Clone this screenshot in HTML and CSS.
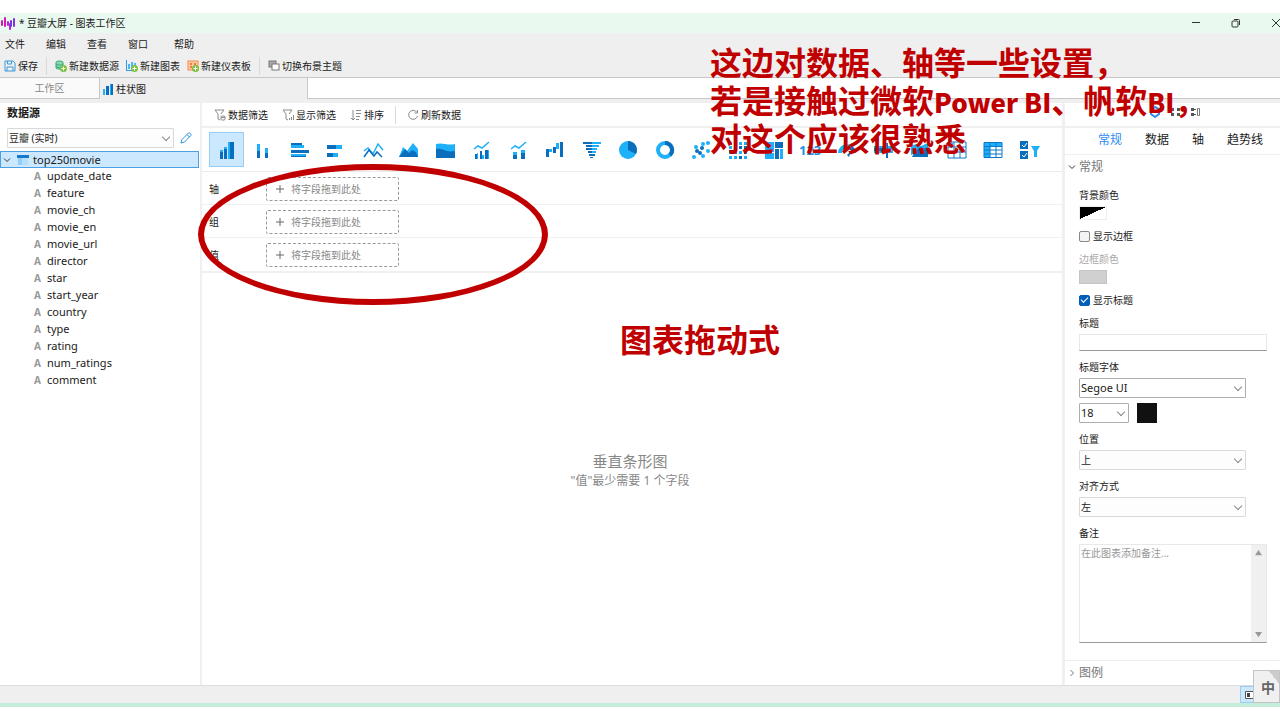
FILE: index.html
```html
<!DOCTYPE html>
<html lang="zh-CN">
<head>
    <meta charset="utf-8">
    <title>豆瓣大屏 - 图表工作区</title>
    <link rel="stylesheet" href="styles.css">
</head>
<body>

    <div id="window">
        <header id="titlebar">
            <svg class="logo" viewBox="0 0 14 14"><path d="M1 5v4M4 2v8" stroke="#d619b5"/><path d="M7 6v3M9 8v5" stroke="#b026d9"/><path d="M10 5v5M13 3v7" stroke="#7d35e0"/></svg>
            <span class="name">* 豆瓣大屏 - 图表工作区</span>
            <div class="winbtns">
                <button aria-label="最小化"><svg viewBox="0 0 10 10"><path d="M1 4.500h8"/></svg></button>
                <button aria-label="还原"><svg viewBox="0 0 10 10"><rect x="1" y="3" width="6" height="6" rx="1"/><path d="M3 1.500h4.500a1 1 0 0 1 1 1V7"/></svg></button>
                <button aria-label="关闭"><svg viewBox="0 0 10 10"><path d="M1 1l8 8M9 1l-8 8"/></svg></button>
            </div>
        </header>

        <nav id="menu">
            <a href="#">文件</a>
            <a href="#">编辑</a>
            <a href="#">查看</a>
            <a href="#">窗口</a>
            <a href="#">帮助</a>
        </nav>

        <div id="toolbar">
            <button><svg viewBox="0 0 12 12" fill="none" stroke="#3a9ad9"><path d="M1 1h8l2 2v8H1zM3.500 1v3h4V1M3 11V7h6v4"/></svg>保存</button>
            <i class="sep"></i>
            <button><svg viewBox="0 0 12 12"><path d="M1 2.500C1 .5 8 .5 8 2.500V8c0 1.500-6 1.500-7 0z" fill="#8fd6b4" stroke="#2aa876"/><path d="M1 4c1 1.500 6 1.500 7 0M1 6.500c1 1.500 6 1.500 7 0" fill="none" stroke="#2aa876"/><circle cx="8.500" cy="8.500" r="3.500" fill="#7cc142"/><path d="M8.500 6.500v4M6.500 8.500h4" stroke="#fff"/></svg>新建数据源</button>
            <button><svg viewBox="0 0 12 12"><path d="M0 0h1v10h6v1H0z" fill="#2b9de8"/><path d="M2 4h2v5H2zM5 2h2v7H5zM8 3h2v3H8z" fill="#4db4f5"/><circle cx="8.500" cy="8.500" r="3.500" fill="#7cc142"/><path d="M8.500 6.500v4M6.500 8.500h4" stroke="#fff"/></svg>新建图表</button>
            <button><svg viewBox="0 0 12 12"><rect x="1" y="1" width="10" height="9" fill="#ffc9a3" stroke="#f58b4c"/><path d="M3 3h2v2H3zM7 3h2v2H7zM3 6h2v2H3z" fill="#f47a3c"/><circle cx="8.500" cy="8.500" r="3.500" fill="#7cc142"/><path d="M8.500 6.500v4M6.500 8.500h4" stroke="#fff"/></svg>新建仪表板</button>
            <i class="sep"></i>
            <button><svg viewBox="0 0 12 12" stroke="#777"><rect x="1" y="1" width="7" height="6" fill="#aaa"/><rect x="4" y="4" width="7" height="6" fill="#fff"/></svg>切换布景主题</button>
        </div>

        <div id="tabs">
            <a class="tab" href="#">工作区</a>
            <a class="tab active" href="#"><svg viewBox="0 0 12 12"><path d="M1 6h2v6H1z" fill="#1fb0fa"/><path d="M4 3h3v9H4zM9 1h2v11H9z" fill="#0a6ebd"/><path d="M8 1h1v11H8z" fill="#1fb0fa"/></svg>柱状图</a>
            <div class="rest"></div>
        </div>

        <div id="content">
            <aside id="left">
                <h2>数据源</h2>
                <div class="source">
                    <div class="select"><select aria-label="数据源"><option>豆瓣 (实时)</option></select></div>
                    <button class="edit" aria-label="编辑"><svg viewBox="0 0 12 12" fill="none" stroke="#2f96e0"><path d="M1 11l1-3.500L8.500 1c.8-.8 3.200 1.300 2.500 2.300L4.500 10zM7 2.500L9.500 5"/></svg></button>
                </div>
                <div class="root">
                    <svg class="chev" viewBox="0 0 8 8"><path d="M1 2.500l3 3 3-3"/></svg>
                    <svg class="table" viewBox="0 0 12 12"><path d="M1 4h10v7H1z" fill="#b5defb"/><path d="M1 4h4v7H1z" fill="#8fd0fa"/><path d="M0 1h12v3H0z" fill="#1478cc"/></svg>
                    top250movie
                </div>
                <ul class="fields">
                    <li>update_date</li>
                    <li>feature</li>
                    <li>movie_ch</li>
                    <li>movie_en</li>
                    <li>movie_url</li>
                    <li>director</li>
                    <li>star</li>
                    <li>start_year</li>
                    <li>country</li>
                    <li>type</li>
                    <li>rating</li>
                    <li>num_ratings</li>
                    <li>comment</li>
                </ul>
            </aside>

            <main id="main">
                <div class="tools">
                    <button><svg viewBox="0 0 12 12"><path d="M1 1h9L7 5M1 1l3 4v5l2 1"/><rect x="7" y="7" width="4" height="4" rx="1"/><path d="M7 8.500h4"/></svg>数据筛选</button>
                    <button><svg viewBox="0 0 12 12"><path d="M1 1h9L7 5M1 1l3 4v5l2 1M7.500 9v2M9.500 8v3M11.500 6v5"/></svg>显示筛选</button>
                    <button><svg viewBox="0 0 12 12"><path d="M3 1v10M1 9l2 2 2-2M6 1.500h5M6 4.500h5M6 7.500h4M6 10.500h3"/></svg>排序</button>
                    <i class="sep"></i>
                    <button><svg viewBox="0 0 12 12"><path d="M10 3.500A4.500 4.500 0 1 0 10.500 7M10.500 1v3h-3"/></svg>刷新数据</button>
                </div>

                <div class="types">
                    <button class="on" aria-label="垂直条形图"><svg viewBox="0 0 20 20"><path class="l" d="M3 10h3v3H3zM7 7h3v3H7zM11 2h3v17h-3z"/><path class="d" d="M3 12h3v7H3zM7 9h3v10H7zM13 2h4v17h-4z"/></svg></button>
                    <button aria-label="堆积条形图"><svg viewBox="0 0 20 20"><path class="l" d="M4 4h3v7H4zM12 8h3v5h-3z"/><path class="d" d="M4 11h3v7H4zM12 13h3v5h-3z"/></svg></button>
                    <button aria-label="水平条形图"><svg viewBox="0 0 20 20"><path class="l" d="M1 5h13v3H1zM1 14h15v2H1z"/><path class="d" d="M1 3h11v2H1zM1 10h18v3H1zM1 16h15v1H1z"/></svg></button>
                    <button aria-label="堆积水平条形图"><svg viewBox="0 0 20 20"><path class="d" d="M1 5h9v4H1zM1 13h6v4H1z"/><path class="l" d="M10 5h6v4h-6zM7 13h5v4H7z"/></svg></button>
                    <button aria-label="折线图"><svg viewBox="0 0 20 20"><path class="sl" d="M1 11l4-3 5 6 5-10 5 6"/><path class="sd" d="M1 17l5-7 5 6 3-4 5 5"/></svg></button>
                    <button aria-label="面积图"><svg viewBox="0 0 20 20"><path class="l" d="M0 17L4 7l4 4 6-8 5 6v8z"/><path class="d" d="M0 17l6-8 4 4 3-3 4 2 2 5z"/></svg></button>
                    <button aria-label="堆积面积图"><svg viewBox="0 0 20 20"><path class="l" d="M0 4c7-2 11 2 19 0v9H0z"/><path class="d" d="M0 9c8-1 9 4 19 2v7H0z"/></svg></button>
                    <button aria-label="组合图"><svg viewBox="0 0 20 20"><path class="sl" d="M2 9l4-3 4 2 7-6"/><path class="d" d="M3 14h2v5H3zM8 11h2v8H8zM13 10h3v9h-3z"/><path class="l" d="M5 13h1v6H5zM10 15h2v4h-2zM16 10h1v9h-1z"/></svg></button>
                    <button aria-label="堆积组合图"><svg viewBox="0 0 20 20"><path class="sl" d="M2 9l4-3 4 2 7-6"/><path class="l" d="M4 12h4v3H4zM12 10h4v3h-4z"/><path class="d" d="M4 15h4v4H4zM12 13h4v6h-4z"/></svg></button>
                    <button aria-label="瀑布图"><svg viewBox="0 0 20 20"><path class="d" d="M1 9h3v8H1zM8 7h3v6H8zM15 2h3v15h-3z"/><path class="l" d="M4 9h3v3H4zM11 3h3v6h-3z"/></svg></button>
                    <button aria-label="漏斗图"><svg viewBox="0 0 20 20"><path class="d" d="M1 2h9v2H1zM4 5h6v2H4zM4 8h6v2H4zM6 11h4v2H6zM7 14h6v2H7zM8 17h3v1H8z"/><path class="l" d="M10 2h9v2h-9zM10 5h7v2h-7zM10 8h5v2h-5zM10 11h4v2h-4z"/></svg></button>
                    <button aria-label="饼图"><svg viewBox="0 0 20 20"><circle class="l" cx="10" cy="10" r="9"/><path class="d" d="M10 10V1a9 9 0 0 1 8 13z"/></svg></button>
                    <button aria-label="环形图"><svg viewBox="0 0 20 20"><circle cx="10" cy="10" r="7" fill="none" stroke="#1fb0fa" stroke-width="4"/><path d="M10 3a7 7 0 0 1 5 12" fill="none" stroke="#0a6ebd" stroke-width="4"/></svg></button>
                    <button aria-label="散点图"><svg viewBox="0 0 20 20"><g class="l"><circle cx="5" cy="7" r="2"/><circle cx="12" cy="4" r="2"/><circle cx="17" cy="3" r="2"/><circle cx="3" cy="17" r="2"/><circle cx="17" cy="11" r="2"/><circle cx="12" cy="16" r="2"/></g><g class="d"><circle cx="11" cy="8" r="2"/><circle cx="6" cy="11" r="2"/><circle cx="9" cy="13" r="2"/></g></svg></button>
                    <button aria-label="热力图"><svg viewBox="0 0 20 20"><path class="d" d="M1 2h3v3H1zM6 2h3v3H6zM11 6h3v3h-3zM16 6h3v3h-3zM6 11h3v3H6zM11 16h3v3h-3zM16 11h3v3h-3z"/><path class="l" d="M11 2h3v3h-3zM16 2h3v3h-3zM1 6h3v3H1zM6 6h3v3H6zM1 11h3v3H1zM11 11h3v3h-3zM1 16h3v3H1zM6 16h3v3H6zM16 16h3v3h-3z"/></svg></button>
                    <button aria-label="树图"><svg viewBox="0 0 20 20"><path class="l" d="M1 2h9v10H1zM1 13h9v6H1zM16 9h3v10h-3z"/><path class="d" d="M11 2h8v6h-8zM11 9h4v10h-4z"/></svg></button>
                    <button aria-label="数值"><svg viewBox="0 0 20 20"><text x="-2" y="15">123</text></svg></button>
                    <button aria-label="仪表"><svg viewBox="0 0 20 20"><path class="l" d="M1 13a9 9 0 0 1 18 0h-4a5 5 0 0 0-10 0z"/><path class="d" d="M13 6a9 9 0 0 1 6 7h-4a5 5 0 0 0-3-4zM10 15l4-4-2 6z"/></svg></button>
                    <button aria-label="子弹图"><svg viewBox="0 0 20 20"><path class="l" d="M0 6h19v7H0z"/><path class="d" d="M12 3h2v15h-2zM0 8h12v3H0z"/></svg></button>
                    <button aria-label="地图"><svg viewBox="0 0 20 20"><path class="l" d="M1 6l5-2 5 2 7-3v9l-7 2-5-1-5 2z"/><path class="d" d="M6 10l5-3 7 3v7H2z"/></svg></button>
                    <button aria-label="透视表"><svg viewBox="0 0 20 20"><path d="M1 2h18v16H1zM1 7h18M1 12h18M7 2v16M13 2v16" fill="#fff" stroke="#0a78cc"/><path class="l" d="M2 3h4v3H2z"/></svg></button>
                    <button aria-label="表格"><svg viewBox="0 0 20 20"><rect x="1" y="2" width="18" height="16" fill="#fff"/><path class="l" d="M1 2h18v4H1zM1 2h6v16H1z"/><path d="M1 2.500h18v15H1zM1 6.500h18M1 10h18M1 14h18M7 2v16M13 2v16" fill="none" stroke="#0a78cc"/></svg></button>
                    <button aria-label="筛选器"><svg viewBox="0 0 20 20"><path class="d" d="M0 1h8v8H0zM0 11h8v8H0z"/><path d="M2 5l2 2 3-4M2 15l2 2 3-4" fill="none" stroke="#fff"/><path class="l" d="M11 6h9l-3 5v6h-3v-6z"/></svg></button>
                </div>

                <div class="shelf">
                    <span>轴</span>
                    <button class="drop"><svg viewBox="0 0 10 10"><path d="M5 1v8M1 5h8"/></svg>将字段拖到此处</button>
                </div>
                <div class="shelf">
                    <span>组</span>
                    <button class="drop"><svg viewBox="0 0 10 10"><path d="M5 1v8M1 5h8"/></svg>将字段拖到此处</button>
                </div>
                <div class="shelf last">
                    <span>值</span>
                    <button class="drop"><svg viewBox="0 0 10 10"><path d="M5 1v8M1 5h8"/></svg>将字段拖到此处</button>
                </div>

                <div class="canvas">
                    <h1>垂直条形图</h1>
                    <p>"值"最少需要 1 个字段</p>
                </div>
            </main>

            <aside id="right">
                <div class="head">
                    <svg viewBox="0 0 12 12" fill="none" stroke="#2e8cf0" stroke-width="2"><path d="M6 1l4 2v5l-4 3-4-3V3z"/></svg>
                    <svg viewBox="0 0 12 12" fill="#555"><path d="M2 2h3v3H2zM8 2h3v3H8zM2 7h3v3H2zM8 7h3v3H8z"/></svg>
                    <svg viewBox="0 0 12 12" fill="#555"><path d="M2 2h3v3H2zM2 7h3v3H2zM5 3h2v1H5zM5 8h2v1H5z"/><path d="M8.500 2.500h2v7h-2z" fill="none" stroke="#777"/></svg>
                </div>
                <nav class="proptabs">
                    <a class="on" href="#">常规</a>
                    <a href="#">数据</a>
                    <a href="#">轴</a>
                    <a href="#">趋势线</a>
                </nav>
                <button class="section"><svg class="chev" viewBox="0 0 8 8"><path d="M1 2.500l3 3 3-3"/></svg>常规</button>
                <form class="props">
                    <div class="field">
                        <label for="bg">背景颜色</label>
                        <button type="button" id="bg" class="swatch none"></button>
                    </div>
                    <div class="check"><input type="checkbox" id="showborder"><label for="showborder">显示边框</label></div>
                    <div class="field off">
                        <label for="bordercolor">边框颜色</label>
                        <button type="button" id="bordercolor" class="swatch" disabled></button>
                    </div>
                    <div class="check"><input type="checkbox" id="showtitle" checked><label for="showtitle">显示标题</label></div>
                    <div class="field">
                        <label for="title">标题</label>
                        <input type="text" id="title">
                    </div>
                    <div class="field">
                        <label for="font">标题字体</label>
                        <div class="select strong"><select id="font"><option>Segoe UI</option></select></div>
                        <div class="fontrow">
                            <div class="select strong small"><select aria-label="字号"><option>18</option></select></div>
                            <button type="button" class="black" aria-label="字体颜色"></button>
                        </div>
                    </div>
                    <div class="field">
                        <label for="pos">位置</label>
                        <div class="select"><select id="pos"><option>上</option></select></div>
                    </div>
                    <div class="field">
                        <label for="align">对齐方式</label>
                        <div class="select"><select id="align"><option>左</option></select></div>
                    </div>
                    <div class="field">
                        <label for="note">备注</label>
                        <div class="note">
                            <textarea id="note" placeholder="在此图表添加备注..."></textarea>
                            <div class="bar">
                                <svg viewBox="0 0 8 8"><path d="M4 1l4 6H0z"/></svg>
                                <svg viewBox="0 0 8 8"><path d="M4 7l4-6H0z"/></svg>
                            </div>
                        </div>
                    </div>
                </form>
                <button class="section legend"><svg class="chev" viewBox="0 0 8 8"><path d="M2.500 1l3 3-3 3"/></svg>图例</button>
            </aside>
        </div>

        <footer id="status">
            <button aria-label="面板"><svg viewBox="0 0 12 12"><path d="M1.500 2.500h9v7h-9z" fill="#fff" stroke="#555"/><path d="M3 4h3v4H3z" fill="#444"/></svg></button>
            <div id="ime">中</div>
        </footer>

        <div id="ring"></div>
        <p class="mark" id="mark1">这边对数据、轴等一些设置，<br>若是接触过微软<b>Power BI</b>、帆软<b>BI</b>，<br>对这个应该很熟悉</p>
        <p class="mark" id="mark2">图表拖动式</p>
    </div>

</body>
</html>
```

FILE: styles.css
```css
* {
    box-sizing: border-box;
}

body,
h1,
h2,
p,
ul {
    margin: 0;
    padding: 0;
}

body {
    background: #fff;
    color: #1a1a1a;
    font: 10px/14px "Noto Sans", "Noto Sans CJK SC", sans-serif;
}

a {
    color: inherit;
    text-decoration: none;
}

button,
input,
select,
textarea {
    font: inherit;
    color: inherit;
    margin: 0;
}

button {
    display: flex;
    align-items: center;
    padding: 0;
    border: none;
    background: none;
    white-space: nowrap;
}

svg {
    display: block;
    flex: none;
    width: 12px;
    height: 12px;
    overflow: visible;
}

.sep {
    width: 1px;
    height: 18px;
    background: #dadada;
}

#window {
    position: relative;
    display: flex;
    flex-direction: column;
    min-height: 100vh;
    padding: 13px 0;
    overflow: hidden;
}

/* 标题栏 */
#titlebar {
    display: flex;
    align-items: center;
    height: 20px;
    background: #e9f9ef;
}

.logo {
    width: 14px;
    height: 14px;
    margin: 0 4px 0 1px;
    stroke-width: 2;
    stroke-linecap: round;
}

.winbtns {
    display: flex;
    gap: 30px;
    margin: 0 -1px 0 auto;
}

.winbtns svg {
    width: 10px;
    height: 10px;
    fill: none;
    stroke: #333;
}

#menu {
    display: flex;
    gap: 21px;
    height: 22px;
    padding-left: 5px;
    line-height: 22px;
    background: #efefef;
}

#menu a:last-child {
    margin-left: 5px;
}

#toolbar {
    display: flex;
    align-items: center;
    gap: 7px;
    height: 23px;
    padding-left: 4px;
    background: #efefef;
    border-bottom: 1px solid #c8c8c8;
}

#toolbar button {
    gap: 2px;
}

#toolbar .sep {
    margin: 0 1px;
}

/* 标签页 */
#tabs {
    display: flex;
    height: 25px;
    padding-bottom: 4px;
    background: #efefef;
}

.tab {
    display: flex;
    align-items: center;
    justify-content: center;
    width: 100px;
    background: #fafafa;
    border: solid #c8c8c8;
    border-width: 0 1px 1px 0;
    color: #888;
}

.tab.active {
    justify-content: flex-start;
    gap: 2px;
    width: 208px;
    padding-left: 2px;
    background: #efefef;
    border-bottom: none;
    color: #1a1a1a;
}

#tabs .rest {
    flex: 1;
    background: #fff;
    border-bottom: 1px solid #c8c8c8;
}

#content {
    display: flex;
    flex: 1;
}

/* 数据源 */
#left {
    width: 202px;
    border-right: 2px solid #f0f0f0;
    font-size: 11px;
}

#left h2 {
    padding: 3px 7px 8px;
    font-size: 11px;
    line-height: 14px;
}

.source {
    display: flex;
    align-items: center;
    gap: 6px;
    margin: 0 7px 3px;
    font-size: 10px;
}

.select {
    position: relative;
    width: 167px;
    height: 20px;
}

.select select {
    display: block;
    width: 100%;
    height: 100%;
    padding: 0 1px;
    background: #fdfdfd;
    border: 1px solid #d9d9d9;
    border-radius: 1px;
    appearance: none;
}

.select.strong select {
    background: #fff;
    border-color: #adadad;
    font-size: 11px;
}

.select::after {
    content: "";
    position: absolute;
    top: 6px;
    right: 5px;
    width: 5px;
    height: 5px;
    border: solid #888;
    border-width: 0 1px 1px 0;
    transform: rotate(45deg);
}

.chev {
    width: 8px;
    height: 8px;
    fill: none;
    stroke: #333;
}

.root {
    display: flex;
    align-items: center;
    height: 17px;
    margin-right: 1px;
    padding-left: 2px;
    background: #cce8ff;
    border: 1px solid #4ba0e4;
}

.table {
    margin: 0 4px 0 6px;
}

.fields {
    list-style: none;
}

.fields li {
    height: 17px;
    padding-left: 34px;
    line-height: 16px;
}

.fields li::before {
    content: "A";
    display: inline-block;
    width: 13px;
    color: #999;
    font-size: 10px;
    font-weight: bold;
}

/* 图表区 */
#main {
    display: flex;
    flex: 1;
    flex-direction: column;
    min-width: 0;
}

.tools {
    display: flex;
    align-items: center;
    gap: 14px;
    height: 25px;
    padding-left: 12px;
    border-bottom: 2px solid #f0f0f0;
}

.tools button {
    gap: 2px;
}

.tools .sep {
    margin-left: -3px;
    margin-right: -3px;
}

.tools svg {
    fill: none;
    stroke: #8a8a8a;
}

.types {
    display: flex;
    align-items: center;
    justify-content: space-between;
    height: 44px;
    padding: 0 15px 0 7px;
    border-bottom: 1px solid #ececec;
}

.types button {
    justify-content: center;
    width: 35px;
    height: 35px;
    border: 1px solid transparent;
}

.types button.on {
    background: #cce8ff;
    border-color: #99cdf5;
}

.types svg {
    width: 20px;
    height: 20px;
}

.types .d {
    fill: #0a6ebd;
}

.types .l {
    fill: #1fb0fa;
}

.types .sd,
.types .sl {
    fill: none;
    stroke: #0a6ebd;
    stroke-width: 1.5;
}

.types .sl {
    stroke: #1fb0fa;
}

.types text {
    fill: #1e90e8;
    font: bold 13px "Noto Sans", sans-serif;
}

.shelf {
    display: flex;
    align-items: center;
    height: 33px;
    padding: 2px 0 0 7px;
    border-bottom: 1px solid #f0f0f0;
}

.shelf.last {
    height: 35px;
    padding-top: 0;
    border-bottom-width: 2px;
}

.shelf span {
    width: 57px;
}

.drop {
    gap: 6px;
    width: 133px;
    height: 24px;
    padding-left: 8px;
    border: 1px dashed #999;
    border-radius: 2px;
    color: #888;
}

.drop svg {
    width: 10px;
    height: 10px;
    fill: none;
    stroke: #666;
}

.canvas {
    display: flex;
    flex: 1;
    flex-direction: column;
    align-items: center;
    justify-content: center;
    gap: 2px;
    padding: 0 4px 16px 0;
    color: #888;
}

.canvas h1 {
    font-size: 15px;
    font-weight: normal;
    line-height: 18px;
}

.canvas p {
    font-size: 12px;
    line-height: 18px;
}

/* 属性面板 */
#right {
    display: flex;
    flex-direction: column;
    width: 218px;
    border-left: 3px solid #f0f0f0;
}

.head {
    display: flex;
    align-items: center;
    gap: 8px;
    height: 25px;
    padding: 0 0 6px 84px;
    border-bottom: 2px solid #f0f0f0;
}

.proptabs {
    display: flex;
    gap: 23px;
    height: 27px;
    padding-left: 33px;
    border-bottom: 1px solid #f0f0f0;
    font-size: 12px;
    line-height: 24px;
    white-space: nowrap;
}

.proptabs .on {
    color: #2e8cf0;
}

.section {
    gap: 3px;
    height: 24px;
    padding-left: 3px;
    color: #777;
    font-size: 12px;
}

.legend {
    height: 25px;
    margin-top: auto;
    border-top: 1px solid #eee;
}

.legend svg {
    stroke: #777;
}

.props {
    display: flex;
    flex-direction: column;
    gap: 9px;
    padding: 9px 13px 16px 14px;
}

.field {
    display: flex;
    flex-direction: column;
    gap: 4px;
}

.field.off {
    color: #aaa;
}

.swatch {
    width: 28px;
    height: 14px;
    background: #d0d0d0;
    border: 1px solid #c4c4c4;
}

.swatch.none {
    background: linear-gradient(to bottom right, #000 50%, #fff 50%);
    border-color: #eee;
}

.check {
    display: flex;
    align-items: center;
    gap: 3px;
    height: 14px;
}

.check input {
    display: flex;
    align-items: center;
    justify-content: center;
    width: 11px;
    height: 11px;
    background: #f5f5f5;
    border: 1px solid #888;
    border-radius: 2px;
    appearance: none;
}

.check input:checked {
    background: #005fb8;
    border-color: #005fb8;
}

.check input:checked::before {
    content: "";
    width: 6px;
    height: 3px;
    margin-bottom: 2px;
    border: solid #fff;
    border-width: 0 0 1px 1px;
    transform: rotate(-45deg);
}

#title {
    width: 100%;
    height: 17px;
    border: 1px solid #e8e8e8;
    border-bottom-color: #999;
}

.fontrow {
    display: flex;
    gap: 8px;
    margin-top: 1px;
}

.select.small {
    width: 50px;
}

.black {
    width: 20px;
    height: 20px;
    background: #111;
}

.note {
    display: flex;
    height: 99px;
    border: 1px solid #e8e8e8;
    border-bottom-color: #999;
}

.note textarea {
    flex: 1;
    min-width: 0;
    padding: 1px;
    border: none;
    resize: none;
}

.note textarea::placeholder {
    color: #999;
}

.bar {
    display: flex;
    flex-direction: column;
    align-items: center;
    justify-content: space-between;
    width: 15px;
    padding: 4px 0;
    background: #f0f0f0;
}

.bar svg {
    width: 7px;
    height: 7px;
    fill: #999;
}

/* 状态栏 */
#status {
    position: relative;
    display: flex;
    justify-content: flex-end;
    height: 22px;
    padding-right: 22px;
    background: #efefef;
    border-top: 1px solid #ddd;
    border-bottom: 4px solid #c6eddb;
}

#status button {
    width: 18px;
    padding-left: 3px;
    background: #cce8ff;
    border: 1px solid #99cdf5;
}

#ime {
    position: absolute;
    right: 0;
    bottom: 0;
    width: 27px;
    height: 33px;
    padding-left: 3px;
    background: linear-gradient(to top right, #f0f0f0 80%, #ccc 80%);
    border: 1px solid #c4c4c4;
    color: #666;
    font-size: 14px;
    font-weight: bold;
    line-height: 33px;
    text-align: center;
}

/* 批注 */
#ring {
    position: absolute;
    left: 198px;
    top: 164px;
    width: 350px;
    height: 141px;
    border: 6px solid #c00000;
    border-radius: 50%;
}

.mark {
    position: absolute;
    color: #c00000;
    font: bold 32px/38px "Noto Sans CJK SC", sans-serif;
    white-space: nowrap;
}

.mark b {
    font-size: 26px;
    line-height: 26px;
}

#mark1 {
    left: 710px;
    top: 42px;
}

#mark2 {
    left: 620px;
    top: 319px;
}
```
